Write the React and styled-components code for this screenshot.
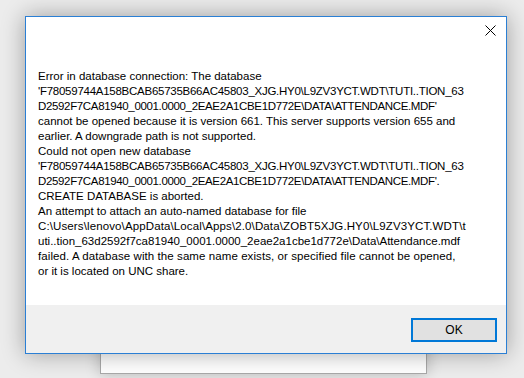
import React from 'react';
import styled, { createGlobalStyle } from 'styled-components';

const GlobalStyle = createGlobalStyle`
  html, body {
    margin: 0;
    padding: 0;
    background: #ececec;
  }
`;

const Desktop = styled.div`
  position: relative;
  width: 524px;
  height: 378px;
  overflow: hidden;
  background: #ececec;
  font-family: "Liberation Sans", Arial, sans-serif;
`;

const BackWindow = styled.div`
  position: absolute;
  left: 100px;
  top: 200px;
  width: 325px;
  height: 172px;
  background: #ffffff;
  border: 1px solid #a8a8a8;
  box-shadow: 0 0 14px rgba(0, 0, 0, 0.22);
`;

const Dialog = styled.div`
  position: absolute;
  left: 25px;
  top: 16px;
  width: 480px;
  height: 336px;
  display: flex;
  flex-direction: column;
  background: #ffffff;
  border: 1px solid #2b7fd4;
  box-shadow: 0 0 22px rgba(0, 0, 0, 0.33);
`;

const TitleBar = styled.div`
  height: 32px;
  display: flex;
  justify-content: flex-end;
  align-items: center;
`;

const CloseButton = styled.button`
  width: 44px;
  height: 30px;
  border: none;
  background: transparent;
  display: flex;
  align-items: center;
  justify-content: center;
  padding: 0;
  margin-right: -6px;
  margin-top: -6px;
`;

const Body = styled.div`
  flex: 1;
  padding: 20px 0 0 12px;
`;

const Message = styled.div`
  font-size: 11.5px;
  line-height: 15px;
  color: #000000;
`;

const Line = styled.div`
  white-space: nowrap;
  letter-spacing: ${(p) => p.$spacing || 0}px;
`;

const Footer = styled.div`
  height: 48px;
  background: #f0f0f0;
  display: flex;
  justify-content: flex-end;
  align-items: center;
  padding-right: 9px;
`;

const OkButton = styled.button`
  width: 86px;
  height: 24px;
  box-sizing: border-box;
  border: 2px solid #0078d7;
  background: #e1e1e1;
  font-family: "Liberation Sans", Arial, sans-serif;
  font-size: 12px;
  color: #000;
  padding: 0;
  margin-top: 1px;
`;

// Liberation Sans caps run wider than the dialog font, so the path lines get tightened
const lines = [
  { text: 'Error in database connection: The database' },
  { text: "'F78059744A158BCAB65735B66AC45803_XJG.HY0\\L9ZV3YCT.WDT\\TUTI..TION_63", spacing: -0.26 },
  { text: "D2592F7CA81940_0001.0000_2EAE2A1CBE1D772E\\DATA\\ATTENDANCE.MDF'", spacing: -0.35 },
  { text: 'cannot be opened because it is version 661. This server supports version 655 and' },
  { text: 'earlier. A downgrade path is not supported.' },
  { text: 'Could not open new database' },
  { text: "'F78059744A158BCAB65735B66AC45803_XJG.HY0\\L9ZV3YCT.WDT\\TUTI..TION_63", spacing: -0.26 },
  { text: "D2592F7CA81940_0001.0000_2EAE2A1CBE1D772E\\DATA\\ATTENDANCE.MDF'.", spacing: -0.35 },
  { text: 'CREATE DATABASE is aborted.' },
  { text: 'An attempt to attach an auto-named database for file' },
  { text: 'C:\\Users\\lenovo\\AppData\\Local\\Apps\\2.0\\Data\\ZOBT5XJG.HY0\\L9ZV3YCT.WDT\\t', spacing: 0.12 },
  { text: 'uti..tion_63d2592f7ca81940_0001.0000_2eae2a1cbe1d772e\\Data\\Attendance.mdf' },
  { text: 'failed. A database with the same name exists, or specified file cannot be opened,', spacing: 0.08 },
  { text: 'or it is located on UNC share.' },
];

const App = () => {
  return (
    <>
      <GlobalStyle />
      <Desktop>
        <BackWindow />
        <Dialog>
          <TitleBar>
            <CloseButton aria-label="Close">
              <svg width="11" height="11" viewBox="0 0 11 11">
                <path d="M0.5 0.5 L10.5 10.5 M10.5 0.5 L0.5 10.5" stroke="#000" strokeWidth="1" />
              </svg>
            </CloseButton>
          </TitleBar>
          <Body>
            <Message>
              {lines.map((l, i) => (
                <Line key={i} $spacing={l.spacing}>
                  {l.text}
                </Line>
              ))}
            </Message>
          </Body>
          <Footer>
            <OkButton>OK</OkButton>
          </Footer>
        </Dialog>
      </Desktop>
    </>
  );
};

export default App;
